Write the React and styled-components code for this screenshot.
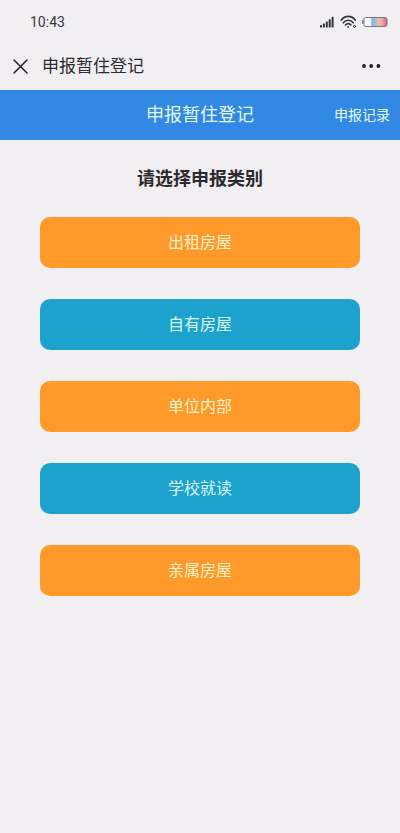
import React from "react";
import styled, { createGlobalStyle } from "styled-components";

const GlobalStyle = createGlobalStyle`
  *, *::before, *::after { box-sizing: border-box; }
  body {
    margin: 0;
    background: #f1eff2;
    color: #2b2b2d;
    font-family: Roboto, "Noto Sans CJK SC", sans-serif;
  }
  button { font-family: inherit; cursor: pointer; }
`;

const Page = styled.div`
  min-height: 100vh;
  display: flex;
  flex-direction: column;
`;

const StatusBar = styled.div`
  display: flex;
  align-items: center;
  justify-content: space-between;
  height: 44px;
  padding: 0 12px 0 30px;
`;

const Clock = styled.time`
  font-size: 14px;
  line-height: 20px;
  color: #39393b;
`;

const StatusIcons = styled.div`
  display: flex;
  align-items: center;
  gap: 5px;
  svg { display: block; }
`;

const TitleBar = styled.div`
  display: flex;
  align-items: center;
  height: 46px;
  padding: 0 19px 2px 12px;
`;

const IconButton = styled.button`
  display: flex;
  padding: 0;
  border: 0;
  background: none;
  color: #1f1f21;
  svg { display: block; }
`;

const WindowTitle = styled.div`
  flex: 1;
  margin-left: 13px;
  font-size: 17px;
  line-height: 24px;
`;

const Banner = styled.header`
  display: grid;
  grid-template-columns: 1fr auto 1fr;
  align-items: center;
  height: 50px;
  padding: 0 10px;
  background: #3289e3;
  color: #e2fbff;
`;

const BannerTitle = styled.h1`
  grid-column: 2;
  margin: 0;
  font-size: 18px;
  font-weight: 400;
  line-height: 26px;
`;

const RecordsLink = styled.a`
  justify-self: end;
  color: inherit;
  font-size: 14px;
  line-height: 20px;
  text-decoration: none;
`;

const Content = styled.main`
  padding: 26px 40px;
`;

const Prompt = styled.h2`
  margin: 0 0 25px;
  font-size: 18px;
  font-weight: 700;
  line-height: 26px;
  text-align: center;
`;

const Options = styled.div`
  display: flex;
  flex-direction: column;
  gap: 31px;
`;

const tones = {
  orange: { background: "#ff9a2a", text: "#fff0c9" },
  teal: { background: "#1da2cd", text: "#dcfbff" },
};

const OptionButton = styled.button`
  height: 51px;
  padding: 0;
  border: 0;
  border-radius: 10px;
  background: ${({ $tone }) => tones[$tone].background};
  color: ${({ $tone }) => tones[$tone].text};
  font-size: 16px;
  line-height: 24px;
`;

const options = [
  { label: "出租房屋", tone: "orange" },
  { label: "自有房屋", tone: "teal" },
  { label: "单位内部", tone: "orange" },
  { label: "学校就读", tone: "teal" },
  { label: "亲属房屋", tone: "orange" },
];

const SignalIcon = () => (
  <svg width="15" height="12" viewBox="0 0 15 12" fill="#343436" aria-hidden="true">
    <rect x="0" y="9" width="2" height="2.5" rx=".6" />
    <rect x="2.9" y="7.4" width="2" height="4.1" rx=".6" />
    <rect x="5.8" y="5.4" width="2" height="6.1" rx=".6" />
    <rect x="8.7" y="3.2" width="2" height="8.3" rx=".6" />
    <rect x="11.6" y=".8" width="2" height="10.7" rx=".6" />
  </svg>
);

const WifiIcon = () => (
  <svg width="17" height="14" viewBox="0 0 17 14" fill="none" stroke="#343436" strokeWidth="1.6" strokeLinecap="round" aria-hidden="true">
    <path d="M1.2 5.2C5 .1 11.6 .1 15.4 5.2" />
    <path d="M3.3 7.8C6 4.4 10.6 4.4 13.2 7.8" />
    <path d="M5.5 10C7.2 8.1 9.4 8.1 11 10" />
    <circle cx="8.2" cy="11.9" r=".9" fill="#343436" stroke="none" />
    <circle cx="14.6" cy="11.4" r="1.1" strokeWidth=".9" />
  </svg>
);

const BatteryIcon = () => (
  <svg width="26" height="10" viewBox="0 0 26 10" aria-hidden="true">
    <defs>
      <linearGradient id="charge">
        <stop offset="0" stopColor="#ffffff" />
        <stop offset=".28" stopColor="#f5f8ff" />
        <stop offset=".34" stopColor="#83b4e5" />
        <stop offset=".5" stopColor="#a4bbd4" />
        <stop offset=".63" stopColor="#e8c398" />
        <stop offset=".8" stopColor="#ee9fa8" />
        <stop offset="1" stopColor="#d95a86" />
      </linearGradient>
    </defs>
    <rect x="0" y="3" width="1.5" height="4" rx=".7" fill="#77767a" />
    <rect x="2" y=".5" width="23" height="9" rx="1.8" fill="url(#charge)" stroke="#77767a" />
  </svg>
);

const CloseIcon = () => (
  <svg width="17" height="17" viewBox="0 0 17 17" fill="none" stroke="currentColor" strokeWidth="1.5" strokeLinecap="round" aria-hidden="true">
    <path d="M2 2l13 13M15 2L2 15" />
  </svg>
);

const MoreIcon = () => (
  <svg width="20" height="6" viewBox="0 0 20 6" fill="currentColor" aria-hidden="true">
    <circle cx="3" cy="3" r="1.9" />
    <circle cx="10.2" cy="3" r="1.9" />
    <circle cx="17.4" cy="3" r="1.9" />
  </svg>
);

export default function App() {
  return (
    <Page>
      <GlobalStyle />
      <StatusBar>
        <Clock>10:43</Clock>
        <StatusIcons>
          <SignalIcon />
          <WifiIcon />
          <BatteryIcon />
        </StatusIcons>
      </StatusBar>
      <TitleBar>
        <IconButton type="button" aria-label="关闭"><CloseIcon /></IconButton>
        <WindowTitle>申报暂住登记</WindowTitle>
        <IconButton type="button" aria-label="更多"><MoreIcon /></IconButton>
      </TitleBar>
      <Banner>
        <BannerTitle>申报暂住登记</BannerTitle>
        <RecordsLink href="#records">申报记录</RecordsLink>
      </Banner>
      <Content>
        <Prompt>请选择申报类别</Prompt>
        <Options>
          {options.map(({ label, tone }) => (
            <OptionButton key={label} type="button" $tone={tone}>{label}</OptionButton>
          ))}
        </Options>
      </Content>
    </Page>
  );
}
